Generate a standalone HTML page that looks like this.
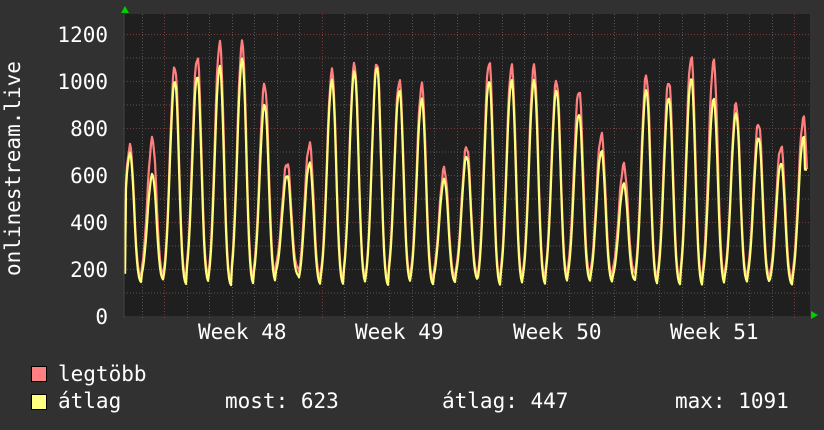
<!DOCTYPE html>
<html><head><meta charset="utf-8"><style>
html,body{margin:0;padding:0;background:#313131;}
body{width:824px;height:430px;overflow:hidden;position:relative;font-family:"DejaVu Sans Mono","Liberation Mono",monospace;color:#fff;}
.t{position:absolute;font-size:21px;line-height:20px;white-space:pre;}
.yl{position:absolute;right:716px;font-size:21px;line-height:20px;text-align:right;}
.sq{position:absolute;width:14px;height:14px;border:1px solid #000;}
</style></head><body>
<svg id="g" width="824" height="430" style="position:absolute;left:0;top:0">
<rect x="124" y="14" width="686" height="302" fill="#1f1f1f"/>
<g id="grid"></g>
<path id="mx" fill="none" stroke="#ff7f7f" stroke-width="2.2" stroke-linejoin="round"/>
<path id="av" fill="none" stroke="#ffff7a" stroke-width="2.2" stroke-linejoin="round"/>
<line x1="124" y1="14" x2="124" y2="318" stroke="#444" stroke-width="1"/>
<polygon points="121,13 129,13 125,6" fill="#00d000"/>
<polygon points="811,311 811,319 818,315" fill="#00d000"/>
</svg>
<div class="yl" style="top:25px">1200</div>
<div class="yl" style="top:72px">1000</div>
<div class="yl" style="top:119px">800</div>
<div class="yl" style="top:166px">600</div>
<div class="yl" style="top:213px">400</div>
<div class="yl" style="top:260px">200</div>
<div class="yl" style="top:307px">0</div>
<div class="t" style="transform:rotate(-90deg);transform-origin:0 0;top:276px;left:3px;">onlinestream.live</div>
<div class="t" style="left:198px;top:322px">Week 48</div>
<div class="t" style="left:355px;top:322px">Week 49</div>
<div class="t" style="left:513px;top:322px">Week 50</div>
<div class="t" style="left:670px;top:322px">Week 51</div>
<div class="sq" style="left:31px;top:366px;background:#ff8080"></div>
<div class="sq" style="left:31px;top:394px;background:#ffff80"></div>
<div class="t" style="left:58px;top:364px">legtöbb</div>
<div class="t" style="left:58px;top:391px">átlag</div>
<div class="t" style="left:225px;top:391px">most: 623</div>
<div class="t" style="left:442px;top:391px">átlag: 447</div>
<div class="t" style="left:675px;top:391px">max: 1091</div>
<script>
var ns="http://www.w3.org/2000/svg",g=document.getElementById("grid");
function ln(x1,y1,x2,y2,c){var l=document.createElementNS(ns,"line");l.setAttribute("x1",x1);l.setAttribute("y1",y1);l.setAttribute("x2",x2);l.setAttribute("y2",y2);l.setAttribute("stroke",c);l.setAttribute("stroke-dasharray","1,2");l.setAttribute("stroke-width","1");g.appendChild(l);}
for(var v=100;v<=1200;v+=100){var y=316-v*0.235+0.5;ln(124,y,810,y,v%200==0?"#7a3a3a":"#555");}
for(var i=0;i<31;i++){var x=141.5+i*22.5;if(x>810)break;var red=((i-1)%7==0);ln(Math.round(x)+0.5,14,Math.round(x)+0.5,319,red?"#7a3a3a":"#555");}
var pk=[[720,690],[750,600],[1060,1000],[1100,1020],[1160,1060],[1160,1090],[985,900],[650,600],[730,650],[1040,1000],[1070,1040],[1080,1060],[1000,960],[980,920],[625,580],[720,680],[1080,1000],[1060,1000],[1060,1000],[1000,960],[960,860],[770,700],[640,560],[1020,960],[1000,930],[1100,1010],[1080,920],[900,860],[820,760],[720,650],[840,760]];
var tr=[[160,140],[170,150],[150,130],[160,140],[140,125],[150,130],[160,140],[200,170],[150,130],[150,130],[150,135],[140,125],[160,140],[150,130],[160,140],[170,150],[140,125],[150,130],[150,130],[160,140],[170,145],[160,140],[180,150],[150,130],[150,130],[140,125],[150,130],[160,140],[160,140],[150,130],[150,130]];
function val(x,k){var d=(x-130)/22.45;var i=Math.round(d);var ph=d-i;if(i<0){i=0;}if(i>30)i=30;var P=pk[i][k],T=tr[i][k];
var a=ph<0?0.30:0.24;var f=Math.exp(-Math.pow(Math.abs(ph)/a,2.2));var w=Math.sin(x*1.7+i)*(k?6:14)*f;return T+(P-T)*f+w;}
function path(k){var s="";for(var x=125;x<=807;x+=1){var v=val(x,k);if(x==125)v=180;if(x>=805&&k==1)v=623;var y=316-v*0.235;s+=(x==125?"M":"L")+x+","+y.toFixed(1);}return s;}
document.getElementById("mx").setAttribute("d",path(0));
document.getElementById("av").setAttribute("d",path(1));
</script>
</body></html>
